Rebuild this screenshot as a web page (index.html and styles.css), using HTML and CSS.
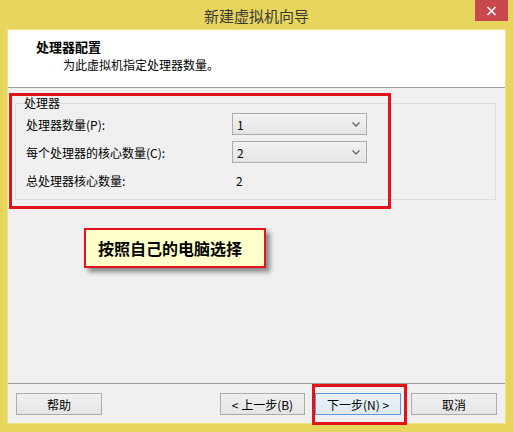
FILE: index.html
```html
<!DOCTYPE html>
<html lang="zh-CN">
<head>
  <meta charset="UTF-8">
  <meta name="viewport" content="width=device-width, initial-scale=1.0">
  <title>新建虚拟机向导</title>
  <link rel="stylesheet" href="styles.css">
</head>
<body>
  <div class="window">
    <div class="titlebar">
      <span class="title">新建虚拟机向导</span>
      <div class="close">
        <svg width="11" height="10" viewBox="0 0 11 10">
          <path d="M1.5 1 L9.5 9 M9.5 1 L1.5 9" stroke="#fff" stroke-width="1.6"/>
        </svg>
      </div>
    </div>

    <div class="client">
      <div class="header">
        <div class="header-title">处理器配置</div>
        <div class="header-sub">为此虚拟机指定处理器数量。</div>
      </div>

      <div class="main">
        <fieldset class="group">
          <legend>处理器</legend>
          <div class="row">
            <span class="label">处理器数量(P):</span>
            <div class="combo">
              <span>1</span>
              <svg width="8" height="5" viewBox="0 0 8 5"><path d="M0.5 0.5 L4 4 L7.5 0.5" fill="none" stroke="#666" stroke-width="1.4"/></svg>
            </div>
          </div>
          <div class="row">
            <span class="label">每个处理器的核心数量(C):</span>
            <div class="combo">
              <span>2</span>
              <svg width="8" height="5" viewBox="0 0 8 5"><path d="M0.5 0.5 L4 4 L7.5 0.5" fill="none" stroke="#666" stroke-width="1.4"/></svg>
            </div>
          </div>
          <div class="row">
            <span class="label">总处理器核心数量:</span>
            <span class="value">2</span>
          </div>
        </fieldset>
      </div>

      <div class="footer">
        <button class="btn">帮助</button>
        <button class="btn btn-back">&lt; 上一步(B)</button>
        <button class="btn btn-default">下一步(N) &gt;</button>
        <button class="btn">取消</button>
      </div>
    </div>

    <!-- red marks drawn over the dialog -->
    <div class="mark mark-group"></div>
    <div class="mark mark-next"></div>
    <div class="note">按照自己的电脑选择</div>
  </div>
</body>
</html>
```

FILE: styles.css
```css
* {
  box-sizing: border-box;
}

body {
  margin: 0;
  font-family: "Noto Sans CJK SC", "DejaVu Sans", sans-serif;
  font-size: 12px;
  color: #000;
}

.window {
  position: relative;
  width: 513px;
  height: 432px;
  background: #e8d55e;
  display: flex;
  flex-direction: column;
}

.titlebar {
  position: relative;
  height: 30px;
  display: flex;
  align-items: center;
  justify-content: center;
}

.title {
  font-size: 15px;
  color: #3a3a3a;
}

.close {
  position: absolute;
  top: 0;
  right: 5px;
  width: 33px;
  height: 21px;
  background: #c9484b;
  display: flex;
  align-items: center;
  justify-content: center;
}

.client {
  flex: 1;
  margin: 0 8px 9px 8px;
  background: #f0f0f0;
  display: flex;
  flex-direction: column;
  outline: 1px solid #f0e27f;
}

.header {
  height: 58px;
  background: #fff;
  border-bottom: 1px solid #a0a0a0;
  padding: 8px 0 0 28px;
}

.header-title {
  font-size: 13px;
  font-weight: bold;
  line-height: 18px;
}

.header-sub {
  padding-left: 27px;
  line-height: 17px;
}

.main {
  flex: 1;
  padding: 7px 9px 0 7px;
}

.group {
  margin: 0;
  border: 1px solid #dcdcdc;
  padding: 2px 8px 8px 8px;
  display: flex;
  flex-direction: column;
  gap: 6px;
}

.group legend {
  padding: 0;
  line-height: 16px;
}

.row {
  height: 22px;
  display: flex;
  align-items: center;
  padding-left: 2px;
}

.label {
  width: 206px;
}

.combo {
  width: 135px;
  height: 22px;
  border: 1px solid #acacac;
  background: linear-gradient(#f2f2f2, #e5e5e5);
  display: flex;
  align-items: center;
  justify-content: space-between;
  padding: 0 6px 0 4px;
}

.value {
  padding-left: 4px;
}

.footer {
  height: 40px;
  border-top: 1px solid #a0a0a0;
  padding: 9px 8px 0 8px;
  display: flex;
  align-items: flex-start;
  gap: 10px;
}

.btn {
  width: 86px;
  height: 22px;
  border: 1px solid #acacac;
  background: linear-gradient(#f0f0f0, #e5e5e5);
  font-family: inherit;
  font-size: 12px;
  color: #000;
  padding: 0;
}

.btn-back {
  margin-left: auto;
  width: 85px;
}

.btn-default {
  border-color: #5a9ad8;
  background: linear-gradient(#eaf1f8, #e0e9f2);
}

.mark {
  position: absolute;
  border: 3px solid #e3131b;
}

.mark-group {
  left: 9px;
  top: 93px;
  width: 382px;
  height: 116px;
}

.mark-next {
  left: 312px;
  top: 384px;
  width: 95px;
  height: 41px;
}

.note {
  position: absolute;
  left: 84px;
  top: 228px;
  width: 182px;
  height: 40px;
  border: 2px solid #e3131b;
  background: #ffffcc;
  box-shadow: 4px 4px 5px rgba(0, 0, 0, 0.45);
  font-size: 16px;
  font-weight: bold;
  line-height: 36px;
  padding-left: 12px;
}
```
